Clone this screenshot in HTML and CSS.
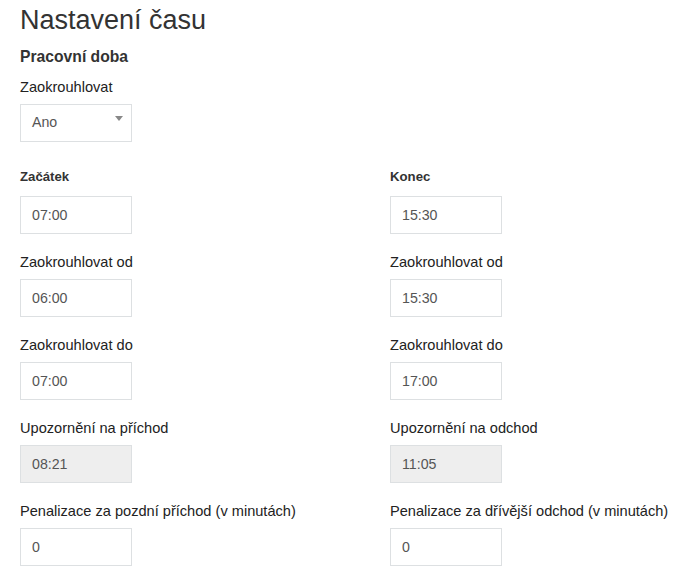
FILE: index.html
```html
<!DOCTYPE html>
<html lang="cs">
<head>
<meta charset="utf-8">
<title>Nastavení času</title>
<link rel="stylesheet" href="styles.css">
</head>
<body>
<main class="page">
  <h1 class="title">Nastavení času</h1>
  <h2 class="section">Pracovní doba</h2>

  <div class="field field-top">
    <label class="label">Zaokrouhlovat</label>
    <div class="select">
      <span class="select-value">Ano</span>
      <span class="caret"></span>
    </div>
  </div>

  <div class="grid">
    <div class="field">
      <label class="label label-bold">Začátek</label>
      <input class="input" type="text" value="07:00">
    </div>
    <div class="field">
      <label class="label label-bold">Konec</label>
      <input class="input" type="text" value="15:30">
    </div>

    <div class="field">
      <label class="label">Zaokrouhlovat od</label>
      <input class="input" type="text" value="06:00">
    </div>
    <div class="field">
      <label class="label">Zaokrouhlovat od</label>
      <input class="input" type="text" value="15:30">
    </div>

    <div class="field">
      <label class="label">Zaokrouhlovat do</label>
      <input class="input" type="text" value="07:00">
    </div>
    <div class="field">
      <label class="label">Zaokrouhlovat do</label>
      <input class="input" type="text" value="17:00">
    </div>

    <div class="field">
      <label class="label">Upozornění na příchod</label>
      <input class="input input-readonly" type="text" value="08:21" readonly>
    </div>
    <div class="field">
      <label class="label">Upozornění na odchod</label>
      <input class="input input-readonly" type="text" value="11:05" readonly>
    </div>

    <div class="field">
      <label class="label">Penalizace za pozdní příchod (v minutách)</label>
      <input class="input" type="text" value="0">
    </div>
    <div class="field">
      <label class="label">Penalizace za dřívější odchod (v minutách)</label>
      <input class="input" type="text" value="0">
    </div>
  </div>
</main>
</body>
</html>
```

FILE: styles.css
```css
html, body {
  margin: 0;
  padding: 0;
  background: #fff;
}

body {
  font-family: "Liberation Sans", Arial, sans-serif;
  color: #222;
}

.page {
  padding: 6px 0 0 20px;
}

.title {
  margin: 0;
  font-size: 27px;
  line-height: 1.1;
  font-weight: normal;
  color: #333;
}

.section {
  margin: 11px 0 0;
  font-size: 15.7px;
  line-height: 20px;
  font-weight: bold;
  color: #333;
}

.field {
  display: flex;
  flex-direction: column;
  align-items: flex-start;
  margin-bottom: 18px;
}

.field-top {
  margin-top: 10px;
  margin-bottom: 25px;
}

.label {
  display: block;
  font-size: 14.6px;
  line-height: 20px;
  margin-bottom: 7px;
  white-space: nowrap;
  color: #222;
}

.label-bold {
  font-size: 13.2px;
  font-weight: bold;
  margin-bottom: 9px;
  color: #333;
}

.grid {
  display: grid;
  grid-template-columns: 370px 1fr;
}

.input,
.select {
  box-sizing: border-box;
  width: 112px;
  height: 38px;
  border: 1px solid #dde0e2;
  border-radius: 0;
  background: #fff;
  font-family: "Liberation Sans", Arial, sans-serif;
  font-size: 14.2px;
  color: #555;
  margin: 0;
  outline: none;
}

.input {
  padding: 0 11px;
}

.input-readonly {
  background: #eee;
}

.select {
  display: flex;
  align-items: center;
  justify-content: space-between;
  padding: 0 8px 1px 11px;
}

.caret {
  width: 0;
  height: 0;
  border-left: 4px solid transparent;
  border-right: 4px solid transparent;
  border-top: 5px solid #888;
  margin-bottom: 7px;
}
```
